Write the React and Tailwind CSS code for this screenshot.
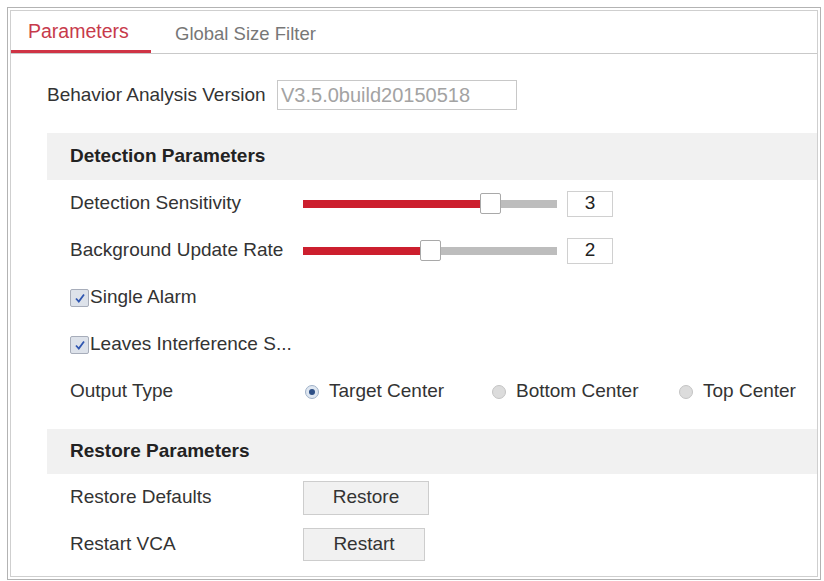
import { useState } from "react";

const font = { fontFamily: '"Liberation Sans", Arial, sans-serif' };

const Slider = ({ pct, value }) => (
  <div className="flex items-center">
    <div className="relative w-[254px] h-[21px] flex items-center">
      <div className="w-full h-[8px] bg-[#bdbdbd] flex">
        <div className="h-full bg-[#cc1f2e]" style={{ width: `${pct}%` }}></div>
      </div>
      <div
        className="absolute top-0 w-[21px] h-[21px] bg-white border border-[#a9a9a9] rounded-[2px]"
        style={{ left: `calc(${pct}% - 2px)` }}
      ></div>
    </div>
    <div className="ml-[10px] w-[46px] h-[26px] border border-[#d0d0d0] flex items-center justify-center text-[#222]">
      {value}
    </div>
  </div>
);

const Check = ({ label }) => (
  <div className="flex items-center">
    <div className="w-[19px] h-[18px] border border-[#a7adba] bg-[#dde2ea] rounded-[2px] flex items-center justify-center">
      <svg width="12" height="12" viewBox="0 0 12 12">
        <path d="M2 6.5 L4.8 9.5 L10 2.5" fill="none" stroke="#2f56b0" strokeWidth="1.8" />
      </svg>
    </div>
    <span className="ml-[1px]">{label}</span>
  </div>
);

const Radio = ({ checked, label }) => (
  <div className="flex items-center">
    <div
      className={`w-[14px] h-[14px] rounded-full border flex items-center justify-center ${
        checked ? "border-[#9fb1c8] bg-[#dfe7f1]" : "border-[#c4c4c4] bg-[#dcdcdc]"
      }`}
    >
      {checked && <div className="w-[6px] h-[6px] rounded-full bg-[#2d4f86]"></div>}
    </div>
    <span className="ml-[10px]">{label}</span>
  </div>
);

const Row = ({ label, children }) => (
  <div className="h-[47px] flex items-center pl-[23px]">
    <div className="w-[233px] shrink-0">{label}</div>
    {children}
  </div>
);

const Band = ({ children, className }) => (
  <div className={`bg-[#f1f1f1] flex items-center pl-[23px] font-bold text-[#222] ${className}`}>
    {children}
  </div>
);

export default function App() {
  const [tab] = useState("params");

  return (
    <div className="w-[824px] h-[581px] bg-white pt-[7px] pl-[7px]" style={font}>
      <div className="w-[814px] h-[573px] border border-[#b3b3b3] p-[2px]">
        <div className="w-full h-full border border-[#cfcfcf] text-[19px] text-[#333]">
          {/* Tabs */}
          <div className="h-[43px] border-b border-[#c9c9c9] flex items-end">
            <div
              className={`w-[140px] h-full flex items-start pt-[6px] pl-[17px] border-b-[3px] text-[19.5px] ${
                tab === "params" ? "border-[#cf3445] text-[#c73a4b]" : ""
              }`}
            >
              Parameters
            </div>
            <div className="h-full flex items-start pt-[9px] pl-[24px] text-[#777] text-[18.5px]">
              Global Size Filter
            </div>
          </div>

          {/* Version */}
          <div className="pl-[36px] mt-[26px] h-[30px] flex items-center">
            <span className="w-[230px] shrink-0 text-[#333]">Behavior Analysis Version</span>
            <div className="w-[240px] h-[30px] border border-[#c8c8c8] flex items-center pl-[3px] text-[#a3a3a3] text-[20px]">
              V3.5.0build20150518
            </div>
          </div>

          <div className="ml-[36px] mt-[23px]">
            <Band className="h-[47px]">Detection Parameters</Band>
            <Row label="Detection Sensitivity">
              <Slider pct={70.5} value="3" />
            </Row>
            <Row label="Background Update Rate">
              <Slider pct={47} value="2" />
            </Row>
            <div className="h-[47px] flex items-center pl-[23px]">
              <Check label="Single Alarm" />
            </div>
            <div className="h-[47px] flex items-center pl-[23px]">
              <Check label="Leaves Interference S..." />
            </div>
            <Row label="Output Type">
              <div className="flex items-center pl-[2px]">
                <div className="w-[187px]">
                  <Radio checked label="Target Center" />
                </div>
                <div className="w-[187px]">
                  <Radio label="Bottom Center" />
                </div>
                <Radio label="Top Center" />
              </div>
            </Row>

            <Band className="h-[45px] mt-[14px]">Restore Parameters</Band>
            <Row label="Restore Defaults">
              <button className="w-[126px] h-[34px] bg-[#f1f1f1] border border-[#cdcdcd] text-[#333]">
                Restore
              </button>
            </Row>
            <Row label="Restart VCA">
              <button className="w-[122px] h-[33px] bg-[#f1f1f1] border border-[#cdcdcd] text-[#333]">
                Restart
              </button>
            </Row>
          </div>
        </div>
      </div>
    </div>
  );
}
